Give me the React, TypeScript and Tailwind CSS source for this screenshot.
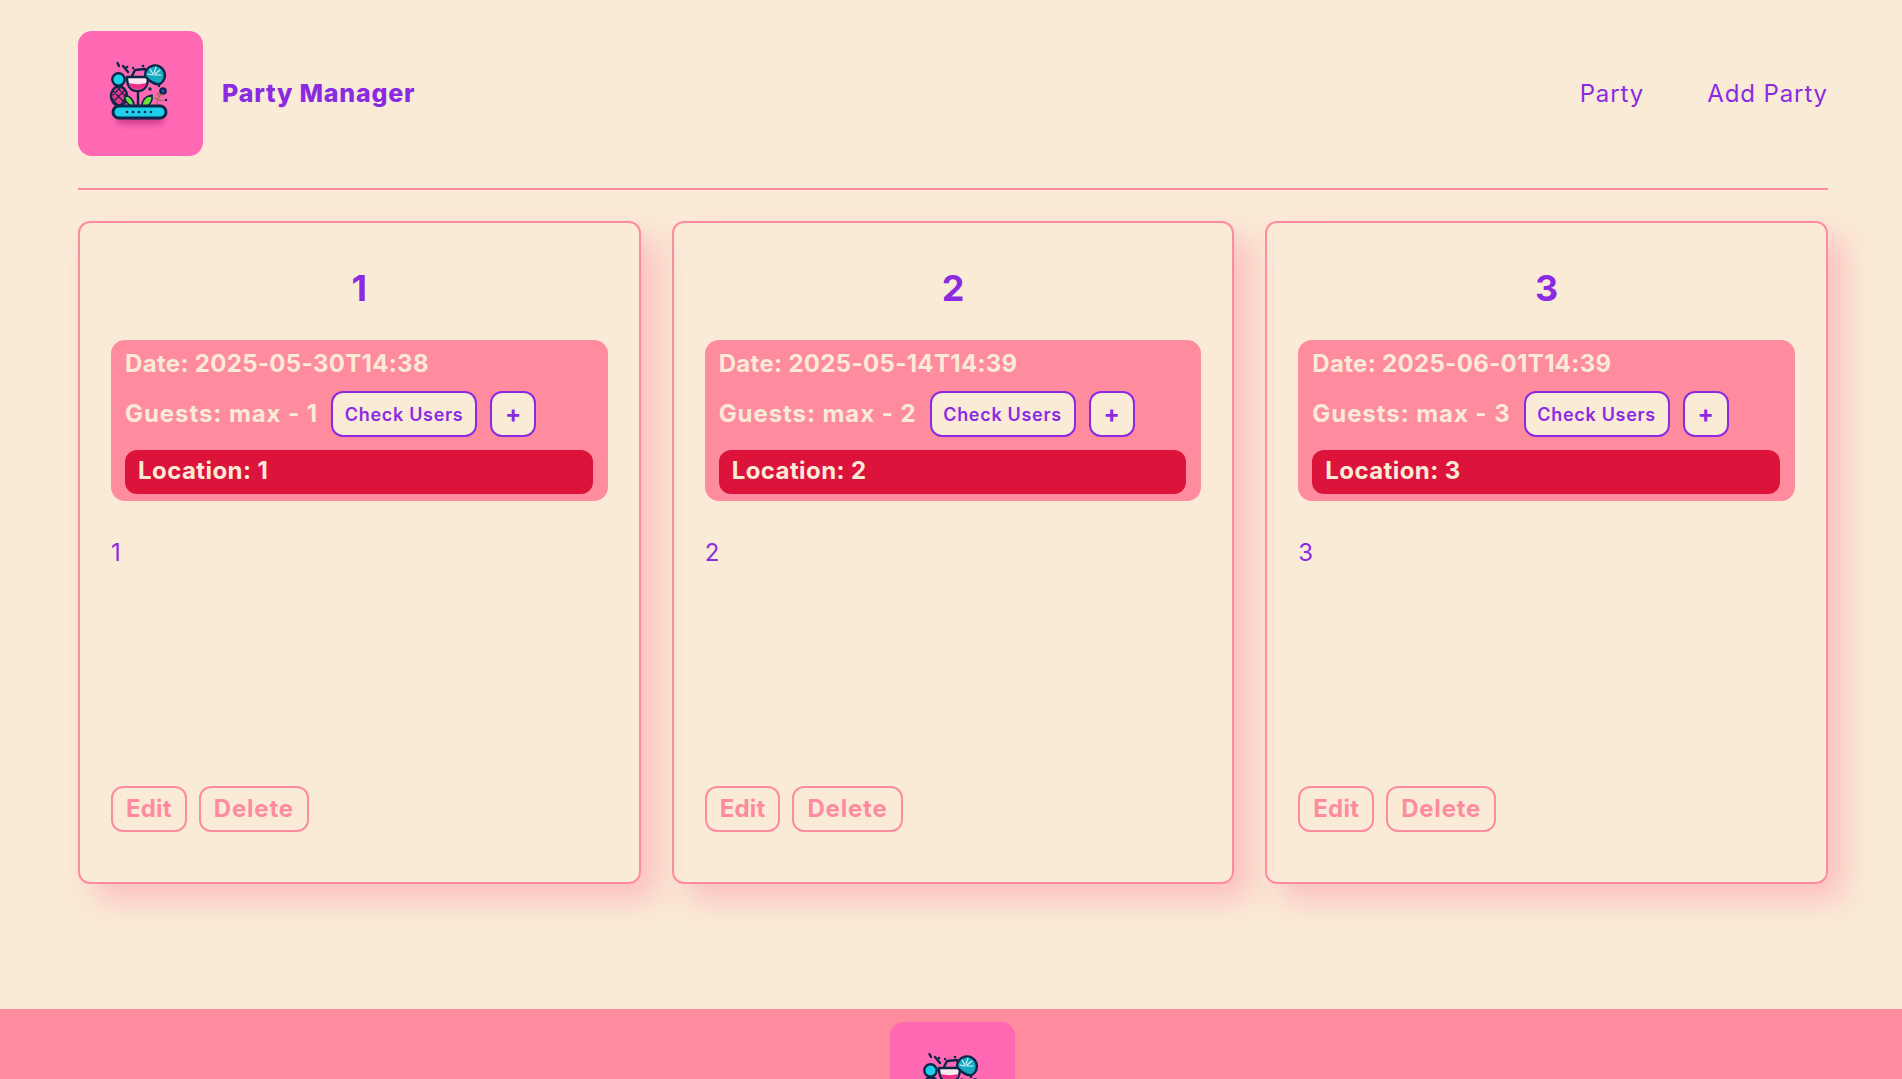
import React from "react";

function Logo() {
  return (
    <div className="w-[125px] h-[125px] shrink-0 rounded-[14px] bg-[#ff69b4]">
      <svg viewBox="0 0 125 125" width="125" height="125" className="block">
        <defs>
          <filter id="soft" x="-20%" y="-20%" width="140%" height="140%">
            <feGaussianBlur stdDeviation="0.4" />
          </filter>
          <filter id="sh" x="-30%" y="-100%" width="160%" height="300%">
            <feGaussianBlur stdDeviation="3.5" />
          </filter>
        </defs>
        <rect x="38" y="82" width="48" height="11" rx="5" fill="#a81e68" opacity="0.6" filter="url(#sh)" />
        <g filter="url(#soft)" stroke="#0a2648" strokeWidth="2.4" strokeLinejoin="round" strokeLinecap="round">
          <ellipse cx="41" cy="65" rx="8" ry="9.500" fill="#e8388a" />
          <path d="M35 60l11 11M40 57l7 8M34 67l5 6M47 59l-11 11M42 57l-7 7M48 66l-5 7" strokeWidth="1.100" fill="none" />
          <path d="M54 75c-5-2-8-6-7-11 5 1 9 5 9 11z" fill="#6ee03c" strokeWidth="1.600" />
          <path d="M64 75c0-6 4-10 10-11 1 5-2 10-5 11z" fill="#6ee03c" strokeWidth="1.600" />
          <circle cx="40.500" cy="48.500" r="6.200" fill="#1fd0ec" />
          <path d="M49 46h21c0 9-3 14-10.500 14S49 55 49 46z" fill="#fbe9ef" />
          <path d="M51 52c5 1.500 12 1.500 17.500 0-.5 4-4 6.500-9 6.500s-8-2.500-8.500-6.500z" fill="#ee2f88" stroke="none" />
          <path d="M60 60v15M54 45l3-6 10-1 3 7" fill="none" />
          <path d="M50 41l-5-6M41 35l-1.500-3" fill="none" />
          <path d="M67 45a10 10 0 1 1 15 8c-4 1-10-2-15-8z" fill="#17aac2" />
          <path d="M75 44l-5-1M75 43l-3-5M76 42l2-6M77 43l5-4M77 44l6 0" stroke="#d8f6fa" strokeWidth="1.100" fill="none" />
          <circle cx="85" cy="60" r="2.600" fill="#3750d8" />
          <path d="M79 74c0-5 2-9 5-11M77 67l3 2M79 62l3 3M85 70l-4-1" stroke="#8a7440" strokeWidth="1.100" fill="none" />
          <rect x="35" y="75" width="53" height="12" rx="6" fill="#1fd0ec" strokeWidth="3" />
        </g>
        <g fill="#0a2648">
          <circle cx="49" cy="81" r="1.300" /><circle cx="55" cy="81" r="1.300" /><circle cx="61" cy="81" r="1.300" /><circle cx="67" cy="81" r="1.300" /><circle cx="73" cy="81" r="1.300" />
          <circle cx="49" cy="36" r="1.300" /><circle cx="55" cy="37" r="1.200" /><circle cx="65" cy="35" r="1.300" />
          <circle cx="81" cy="55" r="1.200" /><circle cx="72" cy="58" r="1.700" /><circle cx="88" cy="69" r="1.300" />
        </g>
      </svg>
    </div>
  );
}

function Card({ n, date }: { n: string; date: string }) {
  return (
    <div className="flex h-[663px] flex-col rounded-[12px] border-2 border-[#ff8c9e] px-[31px] pb-[50px] pt-[32px] shadow-[16px_16px_30px_rgba(255,140,158,0.45)]">
      <h2 className="mb-[22px] mt-[3px] text-center text-[36px] font-bold leading-[60px] text-[#8a2be2]">{n}</h2>
      <div className="rounded-[14px] bg-[#ff8c9e] px-[14px] pb-[7px] pt-[6px] text-[24px] font-bold text-[#faebd7]">
        <div className="leading-[36px] tracking-[0.32px]">Date: {date}</div>
        <div className="mt-[9px] flex items-center gap-[13px]">
          <span className="leading-[46px] tracking-[0.93px]">Guests: max - {n}</span>
          <button className="h-[46px] w-[146px] rounded-[12px] border-2 border-[#8a2be2] bg-[#faebd7] text-[18px] font-semibold tracking-[0.7px] text-[#8a2be2]">Check Users</button>
          <button className="h-[46px] w-[46px] rounded-[12px] border-2 border-[#8a2be2] bg-[#faebd7] text-[24px] font-bold leading-none text-[#8a2be2]">+</button>
        </div>
        <div className="mr-[1px] mt-[13px] h-[44px] rounded-[12px] bg-[#dc143c] px-[13px] leading-[42px] tracking-[0.42px] text-[#faebd7]">Location: {n}</div>
      </div>
      <p className="mt-[34px] flex-1 text-[24px] font-normal leading-[36px] text-[#8a2be2]">{n}</p>
      <div className="flex gap-[12px]">
        <button className="h-[46px] rounded-[12px] border-2 border-[#ff8c9e] px-[13px] text-[24px] font-bold tracking-[0.2px] text-[#ff8c9e]">Edit</button>
        <button className="h-[46px] rounded-[12px] border-2 border-[#ff8c9e] px-[13px] text-[24px] font-bold tracking-[0.8px] text-[#ff8c9e]">Delete</button>
      </div>
    </div>
  );
}

export default function App() {
  return (
    <div className="h-screen overflow-hidden bg-[#faebd7] font-['Inter',sans-serif]">
      <div className="pl-[78px] pr-[74px]">
        <header className="flex items-center justify-between border-b-2 border-[#ff8c9e] pb-[32px] pt-[31px]">
          <div className="flex items-center gap-[19px]">
            <Logo />
            <span className="text-[25px] font-extrabold tracking-[0.8px] text-[#8a2be2]">Party Manager</span>
          </div>
          <nav className="flex gap-[63px] text-[24px] font-normal tracking-[0.9px] text-[#8a2be2]">
            <a>Party</a>
            <a>Add Party</a>
          </nav>
        </header>
        <main className="mt-[31px] grid grid-cols-3 gap-[31px]">
          <Card n="1" date="2025-05-30T14:38" />
          <Card n="2" date="2025-05-14T14:39" />
          <Card n="3" date="2025-06-01T14:39" />
        </main>
      </div>
      <footer className="mt-[125px] flex justify-center bg-[#ff8c9e] pb-[13px] pl-[2px] pt-[13px]">
        <Logo />
      </footer>
    </div>
  );
}
